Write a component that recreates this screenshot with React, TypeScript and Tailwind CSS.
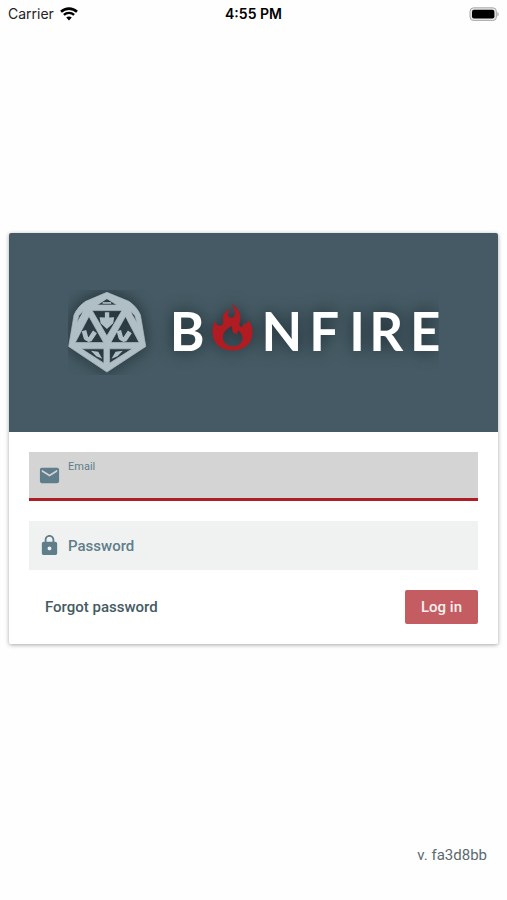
import { useState } from "react";
import { MdEmail, MdLock } from "react-icons/md";

const version = "fa3d8bb";

function StatusBar() {
  return (
    <header className="grid h-8 grid-cols-3 items-center px-2 pb-1 font-['Inter',sans-serif] text-sm text-[#222]">
      <div className="flex items-center gap-1.5">
        <span>Carrier</span>
        <svg viewBox="0 0 18 14" className="h-3.5 w-[18px]" fill="none" stroke="#000" aria-label="Wi-Fi">
          <path d="M1 4.8C5.5 .6 12.5 .6 17 4.8" strokeWidth="2.6" />
          <path d="M3.9 7.9C6.8 5.2 11.2 5.2 14.1 7.9" strokeWidth="2.4" />
          <path d="M6.2 10.5C7.8 9 10.2 9 11.8 10.5L9 13.4Z" fill="#000" stroke="none" />
        </svg>
      </div>
      <p className="text-center font-semibold text-black">4:55 PM</p>
      <svg viewBox="0 0 30 14" className="h-3.5 w-[30px] justify-self-end" aria-label="Battery">
        <rect x="1" y=".8" width="26.4" height="12.8" rx="3.6" fill="#e4e4e4" stroke="#aaa" />
        <rect x="3" y="2.8" width="22.4" height="8.8" rx="2" fill="#000" />
        <path d="M28.4 5C30.2 6 30.2 8.4 28.4 9.4Z" fill="#aaa" />
      </svg>
    </header>
  );
}

function Logo() {
  return (
    <svg viewBox="68 290 372 86" className="w-full overflow-hidden" role="img" aria-label="Bonfire">
      {/* d20 */}
      <g className="drop-shadow-[0_0_8px_#1c2a30]">
        <g transform="translate(55 280) scale(.3333)">
          <path
            fill="#b0bec5"
            fillRule="evenodd"
            stroke="#b0bec5"
            strokeWidth="2"
            strokeLinejoin="round"
            d="M156 37L222 64Q246 80 257 105L273 200L156 277L41 200L57 105Q68 80 92 64Z
               M127 75H186L156 56Z
               M112 92H201L156 168Z
               M102 110L61 188H146Z
               M212 110L168 188H253Z
               M80 207H147V250Z
               M164 207H232L164 250Z
               M84 94L72 107L65 129L80 104Z
               M228 94L240 107L247 129L232 104Z"
          />
          <path fill="#b0bec5" d="M150 97H163V113L178 112L175 130L156 147L137 130L134 112L150 113Z" />
          <path
            fill="none"
            stroke="#b0bec5"
            strokeWidth="14"
            strokeLinejoin="bevel"
            d="M87 152L93 174L104 180L120 156M192 152L198 174L209 180L225 156"
          />
          <path fill="#b0bec5" d="M108 213L130 216L142 237L124 229ZM204 213L182 216L170 237L188 229Z" />
          <path fill="none" stroke="#b0bec5" strokeWidth="5" d="M143 69H169" />
        </g>
      </g>
      <g className="drop-shadow-[0_0_8px_#1c2a30]">
        <text
          x="170 262 310 350 370 411"
          y="351"
          fill="#fff"
          className="font-['Lato',sans-serif] text-[53px] font-bold"
        >
          BNFIRE
        </text>
        {/* flame in place of the O */}
        <path
          transform="translate(160 290) scale(.3333)"
          fill="#b01c22"
          fillRule="evenodd"
          d="M217 42C232 52 244 66 243 84C243 94 237 102 240 108C245 114 252 110 252 99C260 104 266 100 268 92C276 102 280 115 279 130C278 162 252 182 220 182C186 182 160 162 159 130C158 112 163 102 166 92C168 102 174 110 184 107C194 103 190 92 190 82C190 70 204 67 205 54C213 62 202 72 207 80C212 87 224 84 226 74C229 62 220 54 217 42Z
             M217 108C200 116 190 128 190 144C190 160 204 170 219 170C236 170 249 160 249 146C249 134 242 126 236 120C236 128 234 132 229 132C222 132 217 124 217 108Z"
        />
      </g>
    </svg>
  );
}

export default function App() {
  const [email, setEmail] = useState("");
  const [password, setPassword] = useState("");

  return (
    <div className="flex min-h-screen flex-col bg-[#fefefe] font-['Roboto',sans-serif] text-[#455a64]">
      <StatusBar />

      <main className="flex flex-1 flex-col justify-center px-[9px]">
        <div className="overflow-hidden rounded-xs bg-white shadow-[0_1px_4px_rgba(0,0,0,0.35)]">
          <div className="bg-[#455a64] px-[59px] py-[57px]">
            <Logo />
          </div>

          <form className="flex flex-col gap-5 p-5" onSubmit={(e) => e.preventDefault()}>
            <div className="flex h-[49px] items-center gap-[7px] border-b-3 border-[#ad1f25] bg-[#d4d4d4] px-[9px]">
              <MdEmail className="size-[23px] shrink-0 text-[#607d8b]" />
              <div className="flex flex-1 flex-col">
                <label htmlFor="email" className="text-[11px] leading-4 text-[#607d8b]">
                  Email
                </label>
                <input
                  id="email"
                  type="email"
                  value={email}
                  onChange={(e) => setEmail(e.target.value)}
                  className="h-4 w-full bg-transparent text-[15px] outline-none"
                />
              </div>
            </div>

            <div className="flex h-[49px] items-center gap-[7px] bg-[#f0f2f1] px-[9px]">
              <MdLock className="size-[23px] shrink-0 text-[#607d8b]" />
              <input
                type="password"
                aria-label="Password"
                placeholder="Password"
                value={password}
                onChange={(e) => setPassword(e.target.value)}
                className="h-full w-full bg-transparent text-[15px] font-medium outline-none placeholder:text-[#607d8b]"
              />
            </div>

            <div className="flex items-center justify-between">
              <a href="#forgot" className="px-4 text-[15px] leading-5 font-medium">
                Forgot password
              </a>
              <button
                type="submit"
                className="h-[34px] rounded-xs bg-[#c35d62] px-4 text-[15px] font-medium text-[#fbeff0]"
              >
                Log in
              </button>
            </div>
          </form>
        </div>
      </main>

      <footer className="px-5 pb-[35px] text-right text-[15px] leading-5 text-[#5c6a70]">v. {version}</footer>
    </div>
  );
}
